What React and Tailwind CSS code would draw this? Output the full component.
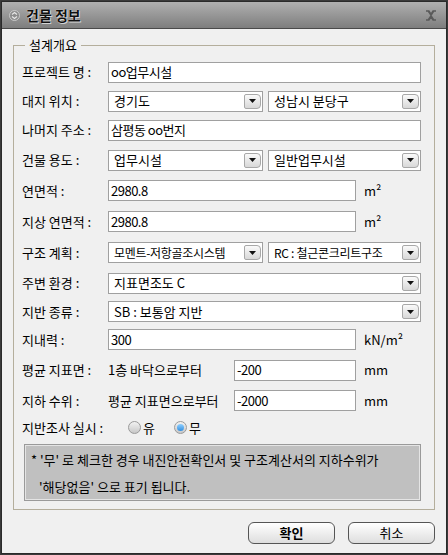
import React from 'react'

const FONT = { fontFamily: '"Noto Sans CJK KR", "Noto Sans", sans-serif' }

const Arrow = () => (
  <span className="flex h-[15px] w-[17px] shrink-0 items-center justify-center rounded-[2px] rounded-r-[4px] border border-[#a8a8a8] bg-gradient-to-b from-[#fafafa] to-[#d8d8d8]">
    <svg width="7" height="4" viewBox="0 0 7 4"><path d="M0 0h7L3.5 4z" fill="#111" /></svg>
  </span>
)

const Select = ({ value, className = '' }) => (
  <div className={`flex h-[21px] min-w-0 items-center justify-between border border-[#a0a0a0] bg-white pl-[5px] pr-[1px] ${className}`}>
    <span className="whitespace-nowrap leading-[16px]">{value}</span>
    <Arrow />
  </div>
)

const Input = ({ value, className = '' }) => (
  <div className={`flex h-[21px] items-center border border-[#a0a0a0] bg-white pl-[2px] ${className}`}>
    <span className="whitespace-nowrap leading-[16px] tracking-[-0.5px]">{value}</span>
  </div>
)

const Label = ({ children }) => <span className="w-[86px] shrink-0 whitespace-nowrap">{children}</span>

const Radio = ({ checked }) => (
  <span className="flex h-[13px] w-[13px] items-center justify-center rounded-full border border-[#9a9a9a] bg-gradient-to-b from-[#f2f2f2] to-[#c8c8c8]">
    {checked && <span className="h-[7px] w-[7px] rounded-full bg-gradient-to-b from-[#8fd0ff] to-[#2f8fe0]" />}
  </span>
)

const Unit = ({ children }) => <span className="ml-2 whitespace-nowrap">{children}</span>

export default function App() {
  return (
    <div className="h-[555px] w-[448px] overflow-hidden bg-[#3a3a3a] p-[1px] text-[13px] text-black" style={FONT}>
      <div className="flex h-full flex-col border border-[#2a2a2a]">
        <div className="flex h-[27px] shrink-0 items-center border-b border-[#4a4a4a] bg-gradient-to-b from-[#b0b0b0] to-[#7e7e7e] px-[7px]">
          <svg width="11" height="11" viewBox="0 0 11 11">
            <circle cx="5.5" cy="5.5" r="5" fill="#8c8c8c" stroke="#c8c8c8" />
            <path d="M3 4.5l2.5-2 2.5 2M3 6.5l2.5 2 2.5-2" fill="none" stroke="#e8e8e8" strokeWidth="1.2" />
          </svg>
          <span className="ml-[6px] text-[14px] font-bold text-[#111] [text-shadow:0_0_1px_#fff,1px_1px_0_#d0d0d0]">건물 정보</span>
          <svg className="ml-auto mr-[2px]" width="12" height="11" viewBox="0 0 12 11">
            <path d="M1 1h3l2 3 2-3h3M1 10h3l2-3 2 3h3M3 1l6 9M9 1l-6 9" fill="none" stroke="#5a5a5a" strokeWidth="1.3" />
          </svg>
        </div>

        <div className="flex flex-1 flex-col bg-[#f0f0f0] px-[11px] pt-[8px]">
          <fieldset className="border border-[#b4ae9c] pb-[8px] pl-[8px] pr-[13px] pt-[4px]">
            <legend className="ml-[3px] px-[4px] text-[13px] leading-[16px]">설계개요</legend>

            <div className="flex h-[30px] items-center">
              <Label>프로젝트 명 :</Label>
              <Input value="oo업무시설" className="flex-1" />
            </div>
            <div className="flex h-[28px] items-center">
              <Label>대지 위치 :</Label>
              <Select value="경기도" className="w-[155px] shrink-0" />
              <Select value="성남시 분당구" className="ml-[5px] flex-1" />
            </div>
            <div className="flex h-[30px] items-center">
              <Label>나머지 주소 :</Label>
              <Input value="삼평동 oo번지" className="flex-1" />
            </div>
            <div className="flex h-[30px] items-center">
              <Label>건물 용도 :</Label>
              <Select value="업무시설" className="w-[155px] shrink-0" />
              <Select value="일반업무시설" className="ml-[5px] flex-1" />
            </div>
            <div className="flex h-[31px] items-center">
              <Label>연면적 :</Label>
              <Input value="2980.8" className="w-[248px]" />
              <Unit>m²</Unit>
            </div>
            <div className="flex h-[31px] items-center">
              <Label>지상 연면적 :</Label>
              <Input value="2980.8" className="w-[248px]" />
              <Unit>m²</Unit>
            </div>
            <div className="flex h-[31px] items-center">
              <Label>구조 계획 :</Label>
              <Select value="모멘트-저항골조시스템" className="w-[155px] shrink-0 pl-[3px] text-[12px] tracking-[-0.3px]" />
              <Select value="RC : 철근콘크리트구조" className="ml-[5px] flex-1 text-[12px] tracking-[-0.3px]" />
            </div>
            <div className="flex h-[30px] items-center">
              <Label>주변 환경 :</Label>
              <Select value="지표면조도 C" className="flex-1" />
            </div>
            <div className="flex h-[27px] items-center">
              <Label>지반 종류 :</Label>
              <Select value="SB : 보통암 지반" className="flex-1" />
            </div>
            <div className="flex h-[29px] items-center">
              <Label>지내력 :</Label>
              <Input value="300" className="w-[248px]" />
              <Unit>kN/m²</Unit>
            </div>
            <div className="flex h-[32px] items-center">
              <Label>평균 지표면 :</Label>
              <span className="w-[126px] shrink-0 whitespace-nowrap">1층 바닥으로부터</span>
              <Input value="-200" className="w-[122px]" />
              <Unit>mm</Unit>
            </div>
            <div className="flex h-[29px] items-center">
              <Label>지하 수위 :</Label>
              <span className="w-[126px] shrink-0 whitespace-nowrap">평균 지표면으로부터</span>
              <Input value="-2000" className="w-[122px]" />
              <Unit>mm</Unit>
            </div>
            <div className="flex h-[25px] items-center">
              <span className="w-[106px] shrink-0 whitespace-nowrap">지반조사 실시 :</span>
              <Radio />
              <span className="ml-[2px]">유</span>
              <span className="ml-[19px] flex items-center">
                <Radio checked />
                <span className="ml-[2px]">무</span>
              </span>
            </div>
            <div className="ml-[2px] mt-[4px] flex h-[57px] flex-col justify-center whitespace-nowrap border border-[#9a9a9a] bg-[#c0c0c0] pl-[6px] leading-[27px] shadow-[inset_0_0_0_1px_#e4e4e4]">
              <div>* '무' 로 체크한 경우 내진안전확인서 및 구조계산서의 지하수위가</div>
              <div className="pl-[8px]">'해당없음' 으로 표기 됩니다.</div>
            </div>
          </fieldset>

          <div className="mt-[12px] flex justify-end gap-[13px]">
            <button className="h-[22px] w-[87px] rounded-[6px] border border-[#555] bg-gradient-to-b from-white to-[#dedede] font-bold">확인</button>
            <button className="h-[22px] w-[87px] rounded-[6px] border border-[#555] bg-gradient-to-b from-white to-[#dedede]">취소</button>
          </div>
        </div>
      </div>
    </div>
  )
}
